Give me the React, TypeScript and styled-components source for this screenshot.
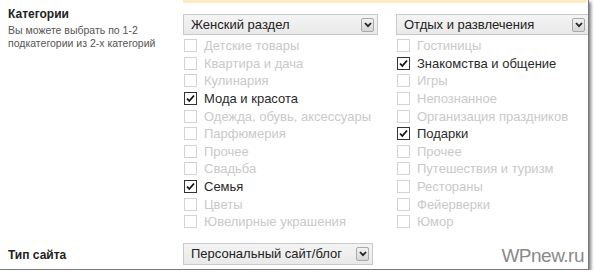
import React from "react";
import styled, { createGlobalStyle } from "styled-components";

type Item = { label: string; checked?: boolean };

const women: Item[] = [
  { label: "Детские товары" },
  { label: "Квартира и дача" },
  { label: "Кулинария" },
  { label: "Мода и красота", checked: true },
  { label: "Одежда, обувь, аксессуары" },
  { label: "Парфюмерия" },
  { label: "Прочее" },
  { label: "Свадьба" },
  { label: "Семья", checked: true },
  { label: "Цветы" },
  { label: "Ювелирные украшения" },
];

const leisure: Item[] = [
  { label: "Гостиницы" },
  { label: "Знакомства и общение", checked: true },
  { label: "Игры" },
  { label: "Непознанное" },
  { label: "Организация праздников" },
  { label: "Подарки", checked: true },
  { label: "Прочее" },
  { label: "Путешествия и туризм" },
  { label: "Рестораны" },
  { label: "Фейерверки" },
  { label: "Юмор" },
];

const Select: React.FC<{ value: string; width: number; height?: number }> = ({
  value,
  width,
  height = 21,
}) => (
  <SelectBox $width={width} $height={height}>
    <SelectText>{value}</SelectText>
    <ArrowButton>
      <svg width="8" height="6" viewBox="0 0 8 6">
        <path d="M1 1 L4 4.2 L7 1" fill="none" stroke="#222" strokeWidth="1.8" />
      </svg>
    </ArrowButton>
  </SelectBox>
);

const CheckList: React.FC<{ items: Item[] }> = ({ items }) => (
  <List>
    {items.map((it) => (
      <Row key={it.label} $active={!!it.checked}>
        <Box $active={!!it.checked}>
          {it.checked && (
            <svg width="11" height="11" viewBox="0 0 11 11">
              <path d="M2 5.5 L4.3 8 L9 2.5" fill="none" stroke="#111" strokeWidth="1.8" />
            </svg>
          )}
        </Box>
        {it.label}
      </Row>
    ))}
  </List>
);

export default function App() {
  return (
    <>
      <GlobalStyle />
      <Frame>
        <Section>
          <Label>
            <Title>Категории</Title>
            <Hint>Вы можете выбрать по 1-2 подкатегории из 2-х категорий</Hint>
          </Label>
          <Fields>
            <YellowBar />
            <Columns>
              <Column>
                <Select value="Женский раздел" width={195} />
                <CheckList items={women} />
              </Column>
              <Column>
                <Select value="Отдых и развлечения" width={193} />
                <CheckList items={leisure} />
              </Column>
            </Columns>
          </Fields>
        </Section>
        <BottomRow>
          <BottomLabel>Тип сайта</BottomLabel>
          <Select value="Персональный сайт/блог" width={190} height={22} />
          <Watermark>WPnew.ru</Watermark>
        </BottomRow>
      </Frame>
    </>
  );
}

const GlobalStyle = createGlobalStyle`
  body {
    margin: 0;
    background: #fff;
    font-family: "Liberation Sans", Arial, sans-serif;
    overflow: hidden;
  }
`;

const Frame = styled.div`
  width: 589px;
  height: 270px;
  box-sizing: border-box;
  background: #fff;
  border-right: 1px solid #7a7a7a;
  border-bottom: 1px solid #7a7a7a;
  box-shadow: 2px 2px 3px rgba(0, 0, 0, 0.5);
  overflow: hidden;
  display: flex;
  flex-direction: column;
`;

const Section = styled.div`
  display: flex;
`;

const Label = styled.div`
  width: 175px;
  flex-shrink: 0;
  padding: 7px 0 0 8px;
  box-sizing: border-box;
`;

const Title = styled.div`
  font-size: 12px;
  font-weight: bold;
  color: #222;
  line-height: 14px;
`;

const Hint = styled.div`
  margin-top: 3px;
  font-size: 10.5px;
  line-height: 13px;
  color: #555;
  width: 160px;
`;

const Fields = styled.div`
  flex: 1;
  min-width: 0;
  padding-left: 8px;
`;

const YellowBar = styled.div`
  height: 3px;
  margin-right: 1px;
  background: #fcecc2;
  border-bottom-right-radius: 2px;
`;

const Columns = styled.div`
  display: flex;
  gap: 18px;
  margin-top: 11px;
`;

const Column = styled.div`
  display: flex;
  flex-direction: column;
  flex-shrink: 0;
`;

const SelectBox = styled.div<{ $width: number; $height: number }>`
  width: ${(p) => p.$width}px;
  height: ${(p) => p.$height}px;
  flex-shrink: 0;
  box-sizing: border-box;
  border: 1px solid #c9c9c9;
  background: linear-gradient(#f4f4f4, #e9e9e9);
  display: flex;
  align-items: center;
  padding: 0 3px 0 7px;
`;

const SelectText = styled.span`
  flex: 1;
  font-size: 13px;
  color: #222;
  white-space: nowrap;
`;

const ArrowButton = styled.span`
  width: 13px;
  height: 14px;
  box-sizing: border-box;
  border: 1px solid #a9a9a9;
  border-radius: 2px;
  background: linear-gradient(#f2f2f2, #d6d6d6);
  display: flex;
  align-items: center;
  justify-content: center;
`;

const List = styled.div`
  margin-top: 2px;
  display: flex;
  flex-direction: column;
`;

const Row = styled.div<{ $active: boolean }>`
  height: 17.6px;
  display: flex;
  align-items: center;
  gap: 7px;
  padding-left: 1px;
  font-size: 13px;
  color: ${(p) => (p.$active ? "#2a2a2a" : "#c9c9c9")};
  white-space: nowrap;
`;

const Box = styled.span<{ $active: boolean }>`
  width: 13px;
  height: 13px;
  box-sizing: border-box;
  border: 1px solid ${(p) => (p.$active ? "#333" : "#d4d4d4")};
  background: #fff;
  display: flex;
  align-items: center;
  justify-content: center;
`;

const BottomRow = styled.div`
  display: flex;
  align-items: flex-start;
  margin-top: 12px;
  position: relative;
  flex: 1;
`;

const BottomLabel = styled.div`
  width: 183px;
  flex-shrink: 0;
  padding: 5px 0 0 8px;
  box-sizing: border-box;
  font-size: 12px;
  font-weight: bold;
  color: #222;
`;

const Watermark = styled.div`
  position: absolute;
  right: 4px;
  bottom: 2px;
  font-size: 19px;
  color: #8a8a8a;
  letter-spacing: -0.5px;
`;
